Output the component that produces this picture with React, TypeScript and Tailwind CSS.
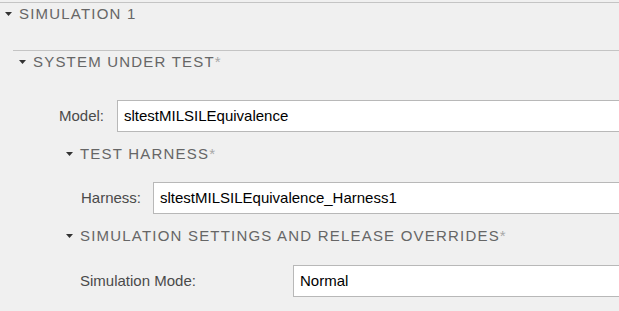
const FONT = "font-['Liberation_Sans',Arial,sans-serif]";

function Caret() {
  return (
    <svg width="7" height="4" viewBox="0 0 7 4" className="shrink-0">
      <polygon points="0,0 7,0 3.5,4" fill="#333333" />
    </svg>
  );
}

function SectionTitle({ text, star = true }: { text: string; star?: boolean }) {
  return (
    <div className="flex items-center gap-[7px] leading-[18px]">
      <Caret />
      <span className="text-[15px] tracking-[1.2px] text-[#666666]">
        {text}
        {star ? <span className="text-[#a8a8a8]">*</span> : null}
      </span>
    </div>
  );
}

function Field({ label, value, indent, labelW }: { label: string; value: string; indent: string; labelW: string }) {
  return (
    <div className={`flex items-center ${indent}`}>
      <div className={`${labelW} shrink-0 text-[15px] leading-[18px] text-[#4a4a4a]`}>{label}</div>
      <div className="flex h-[32px] flex-1 items-center border-y border-l border-[#b8b8b8] bg-white pl-[6px] text-[15px] leading-[18px] text-black">
        {value}
      </div>
    </div>
  );
}

export default function App() {
  return (
    <div className={`h-[311px] w-[619px] overflow-hidden bg-[#f0f0f0] ${FONT}`}>
      <div className="mt-[2px] border-t border-[#c4c4c4]" />
      <div className="ml-[5px] pt-[1.5px]">
        <SectionTitle text="SIMULATION 1" star={false} />
      </div>

      <div className="ml-[13px] mt-[27px] border-t border-[#c4c4c4]">
        <div className="ml-[6px] pt-[2.5px]">
          <SectionTitle text="SYSTEM UNDER TEST" />
        </div>

        <div className="mt-[28.5px]">
          <Field label="Model:" value="sltestMILSILEquivalence" indent="ml-[46px]" labelW="w-[58px]" />
        </div>

        <div className="ml-[53px] mt-[13.5px]">
          <SectionTitle text="TEST HARNESS" />
        </div>

        <div className="mt-[18.5px]">
          <Field label="Harness:" value="sltestMILSILEquivalence_Harness1" indent="ml-[68px]" labelW="w-[72px]" />
        </div>

        <div className="ml-[53px] mt-[13.5px]">
          <SectionTitle text="SIMULATION SETTINGS AND RELEASE OVERRIDES" />
        </div>

        <div className="mt-[19.5px]">
          <Field label="Simulation Mode:" value="Normal" indent="ml-[67px]" labelW="w-[213px]" />
        </div>
      </div>
    </div>
  );
}
